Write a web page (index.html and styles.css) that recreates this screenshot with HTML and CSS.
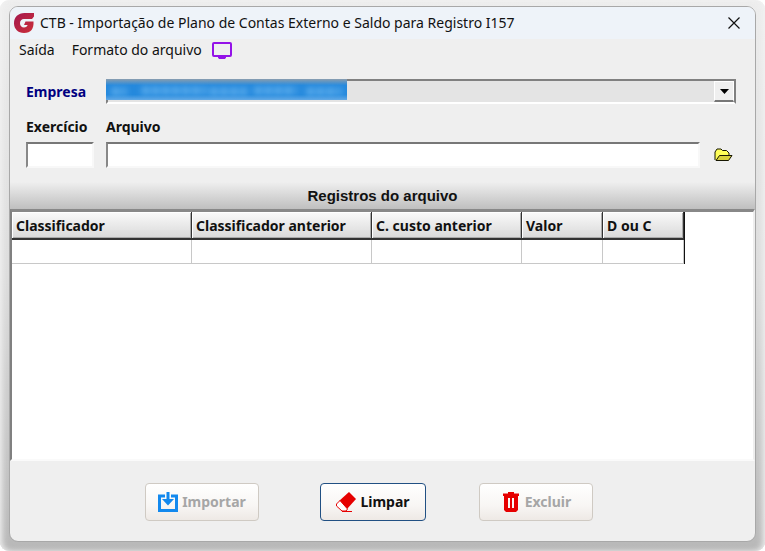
FILE: index.html
```html
<!DOCTYPE html>
<html lang="pt-BR">
<head>
<meta charset="utf-8">
<title>CTB - Importação de Plano de Contas</title>
<link rel="stylesheet" href="styles.css">
</head>
<body>
<main class="window">
  <header class="titlebar">
    <svg class="logo" viewBox="0 0 20 20" aria-hidden="true">
      <defs><linearGradient id="brand" x1="0" y1="0" x2="1" y2="1"><stop offset="0" stop-color="#a3174f"/><stop offset="1" stop-color="#cc3038"/></linearGradient></defs>
      <path fill="url(#brand)" d="M20 0v3.500l-2 2.500h-8C7.500 6 6 7.800 6 10.200c0 2.500 1.600 4.200 4 4.200 2 0 3.200-.9 3.600-2.400H10l1.500-3.500h8c.5 7-2.500 11.500-9.500 11.500C4 20 0 16 0 10.300 0 4.200 4.200 0 10.500 0z"/>
    </svg>
    <h1 class="title">CTB - Importação de Plano de Contas Externo e Saldo para Registro I157</h1>
    <button class="close" type="button" aria-label="Fechar">
      <svg viewBox="0 0 12 12"><path d="M.5.5l11 11M11.500.5l-11 11" stroke="#111" stroke-width="1.200"/></svg>
    </button>
  </header>
  <nav class="menu">
    <button type="button">Saída</button>
    <button type="button">Formato do arquivo</button>
    <button type="button" aria-label="Monitor">
      <svg class="monitor" viewBox="0 0 20 17"><rect x="1" y="1" width="18" height="13" rx="1" fill="none" stroke="#9412e8" stroke-width="2"/><path d="M6 14h8v1.500l-1 1.500H7l-1-1.500z" fill="#9412e8"/></svg>
    </button>
  </nav>
  <form class="fields">
    <div class="company">
      <label class="company-label" for="empresa">Empresa</label>
      <div class="combo">
        <select id="empresa"><option></option></select>
        <span class="selection"><svg viewBox="0 0 240 20" preserveAspectRatio="none" aria-hidden="true"><path d="M6 12h14M36 11h64M104 12h36M148 11h42M200 12h34" stroke="#64b2ee" stroke-width="7" stroke-dasharray="7 3"/></svg></span>
        <span class="arrow"><svg viewBox="0 0 9 5"><path d="M0 0h9L4.500 5z"/></svg></span>
      </div>
    </div>
    <div class="file-row">
      <div class="field year">
        <label for="exercicio">Exercício</label>
        <input id="exercicio" type="text">
      </div>
      <div class="field path">
        <label for="arquivo">Arquivo</label>
        <input id="arquivo" type="text">
      </div>
      <button class="browse" type="button" aria-label="Abrir arquivo">
        <svg viewBox="0 0 19 14"><path d="M1 12V4l2-3h4l1.500 1.500h4L15 5v2" fill="#ffff58" stroke="#161600"/><path d="M2 12.500L5.500 7.500h12.500l-3.500 5z" fill="#d9d23b" stroke="#161600"/></svg>
      </button>
    </div>
  </form>
  <h2 class="section">Registros do arquivo</h2>
  <div class="grid">
    <table>
      <colgroup><col class="c-code"><col class="c-code"><col class="c-cost"><col class="c-value"><col class="c-type"></colgroup>
      <thead><tr><th>Classificador</th><th>Classificador anterior</th><th>C. custo anterior</th><th>Valor</th><th>D ou C</th></tr></thead>
      <tbody><tr><td></td><td></td><td></td><td></td><td></td></tr></tbody>
    </table>
  </div>
  <footer class="actions">
    <button class="action wide" type="button" disabled>
      <svg viewBox="0 0 20 20"><path d="M7 4H1.500v14.500h17V4H13" fill="none" stroke="#1389ee" stroke-width="3"/><path d="M8.500 0h3v7H16l-6 6.500L4 7h4.500z" fill="#1389ee"/></svg>
      Importar
    </button>
    <button class="action primary" type="button">
      <svg viewBox="0 0 20 20"><path d="M13 0l7 7-9 10-8-8z" fill="#e60000"/><path d="M4 8.500L.5 12v2L6 19h4l1.500-2z" fill="#fff" stroke="#e60000"/><path d="M6 19.500h10" stroke="#e60000"/></svg>
      Limpar
    </button>
    <button class="action wide" type="button" disabled>
      <svg viewBox="0 0 20 20"><path d="M2 1.500h5V0h6v1.500h5v2.500H2z" fill="#e60000"/><path fill="#e60000" fill-rule="evenodd" d="M3 4h14v14l-2 2H5l-2-2zM7 6v10h2V6zM11 6v10h2V6z"/></svg>
      Excluir
    </button>
  </footer>
</main>
</body>
</html>
```

FILE: styles.css
```css
* { box-sizing: border-box; }

html { background: #fff; }

body {
  margin: 0;
  min-height: 100vh;
  padding: 6px 9px 9px;
  display: flex;
  border-radius: 9px;
  background: linear-gradient(#ededed, #dcdcdc 50%, #b8b8b8);
  box-shadow: inset 4px 0 6px -2px #f2f2f2, inset -4px 0 6px -2px #f2f2f2;
  color: #111;
  font: bold 14px/18px "Noto Sans", "Open Sans", sans-serif;
}

button {
  font: inherit;
  color: inherit;
  margin: 0;
  padding: 0;
  border: 0;
  background: none;
}

svg { display: block; }

.window {
  flex: 1;
  min-width: 0;
  display: flex;
  flex-direction: column;
  overflow: hidden;
  border: 1px solid #a8a8a8;
  border-radius: 9px;
  background: #efefef;
}

.titlebar {
  display: flex;
  align-items: center;
  gap: 6px;
  height: 32px;
  padding: 0 15px 0 4px;
  background: #eef3f9;
}

.logo { width: 20px; height: 20px; }

.title {
  flex: 1;
  margin: 0;
  font: 14px/20px "Noto Sans", sans-serif;
}

.close svg { width: 12px; height: 12px; }

.menu {
  display: flex;
  align-items: center;
  gap: 17px;
  height: 22px;
  padding: 0 9px;
  font: 14px/20px "Noto Sans", sans-serif;
}

.menu button:last-child { margin-left: -7px; }

.monitor { width: 20px; height: 17px; }

.fields { padding: 18px 19px 14px 16px; }

.company { display: flex; align-items: center; }

.company-label { width: 80px; color: #000080; }

.combo { position: relative; flex: 1; height: 25px; }

.combo select {
  display: block;
  width: 100%;
  height: 100%;
  appearance: none;
  border: 2px solid #808080;
  border-bottom-color: #fff;
  border-radius: 0;
  background: #e4e4e4;
}

.selection {
  position: absolute;
  left: 0;
  top: 0;
  width: 241px;
  height: 21px;
  overflow: hidden;
  background: linear-gradient(#8b9eaf, #2589dd 30%, #2589dd 75%, #64aae6);
}

.selection svg { width: 100%; height: 100%; filter: blur(3px); }

.arrow {
  position: absolute;
  right: 2px;
  top: 2px;
  width: 20px;
  height: 21px;
  display: grid;
  place-items: center;
  border: 1px solid #fff;
  border-bottom: 2px solid #777;
  background: #efefef;
  pointer-events: none;
}

.arrow svg { width: 9px; height: 5px; }

.file-row {
  display: flex;
  align-items: flex-end;
  gap: 12px;
  margin-top: 14px;
}

.field label { display: block; margin-bottom: 6px; }

.field input {
  display: block;
  width: 100%;
  height: 26px;
  padding: 2px 4px;
  border: 2px solid;
  border-color: #777 #f8f8f8 #f8f8f8 #888;
  background: #fff;
}

.year { width: 68px; }

.path { flex: 1; }

.browse { padding: 0 3px 6px 2px; }

.browse svg { width: 19px; height: 14px; }

.section {
  margin: 0;
  padding: 4px 0 3px;
  background: linear-gradient(#efefef, #bfbfbf);
  font: bold 15px/20px "Liberation Sans", sans-serif;
  text-align: center;
}

.grid {
  flex: 1;
  border: solid;
  border-width: 3px 2px 2px;
  border-color: #888 #eee #fafafa #808080;
  background: #fff;
}

table {
  table-layout: fixed;
  width: 673px;
  border-collapse: separate;
  border-spacing: 0;
  border-right: 1px solid #111;
}

.c-code { width: 180px; }
.c-cost { width: 150px; }
.c-value { width: 81px; }
.c-type { width: 81px; }

th {
  height: 28px;
  padding: 2px 4px 0;
  border-right: 1px solid #333;
  border-bottom: 2px solid #333;
  box-shadow: inset 1px 1px #fff, inset -1px -1px #aaa;
  background: linear-gradient(#fafafa, #d9d9d9);
  text-align: left;
  white-space: nowrap;
}

td {
  height: 24px;
  padding: 0;
  border-right: 1px solid #c8c8c8;
  border-bottom: 1px solid #c8c8c8;
}

.actions {
  display: grid;
  grid-template-columns: 175px 159px 114px;
  justify-content: center;
  padding: 22px 27px 20px 0;
}

.action {
  display: flex;
  align-items: center;
  justify-content: center;
  gap: 4px;
  width: 106px;
  height: 38px;
  border: 1px solid #cfcac3;
  border-radius: 4px;
  background: linear-gradient(#fff, #f8f6f4 60%, #eee9e5);
}

.action:disabled { color: #a6a6a6; }

.wide { width: 114px; }

.primary { border-color: #215083; }

.action svg { width: 20px; height: 20px; }
```
